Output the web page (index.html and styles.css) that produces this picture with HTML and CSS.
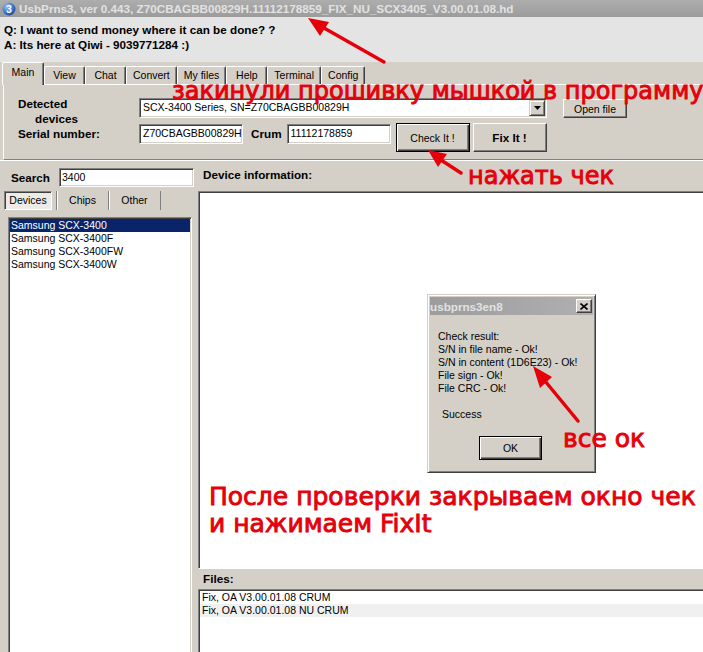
FILE: index.html
```html
<!DOCTYPE html>
<html lang="ru">
<head>
    <meta charset="UTF-8">
    <title>UsbPrns3</title>
    <link rel="stylesheet" href="styles.css">
</head>
<body>

    <div class="window">
        <div class="titlebar">
            <svg class="app-icon" viewBox="0 0 14 14" width="14" height="14">
                <defs>
                    <radialGradient id="ball" cx="0.35" cy="0.3" r="0.8">
                        <stop offset="0" stop-color="#9cc2f4"/>
                        <stop offset="0.6" stop-color="#3b74cf"/>
                        <stop offset="1" stop-color="#1a3f8c"/>
                    </radialGradient>
                </defs>
                <circle cx="7" cy="7" r="6.5" fill="url(#ball)"/>
                <text x="7" y="10.5" text-anchor="middle" class="icon-digit">3</text>
            </svg>
            <span class="title-text">UsbPrns3, ver 0.443, Z70CBAGBB00829H.11112178859_FIX_NU_SCX3405_V3.00.01.08.hd</span>
        </div>

        <div class="qa">
            <p>Q: I want to send money where it can be done? ?</p>
            <p>A: Its here at Qiwi - 9039771284 :)</p>
        </div>

        <div class="tabs">
            <span class="tab active">Main</span>
            <span class="tab">View</span>
            <span class="tab">Chat</span>
            <span class="tab">Convert</span>
            <span class="tab">My files</span>
            <span class="tab">Help</span>
            <span class="tab">Terminal</span>
            <span class="tab">Config</span>
        </div>

        <div class="device-panel">
            <div class="panel-labels">
                <span class="lbl">Detected</span>
                <span class="lbl lbl-indent">devices</span>
                <span class="lbl">Serial number:</span>
            </div>
            <div class="panel-controls">
                <div class="row">
                    <div class="combo">
                        <span class="combo-text">SCX-3400 Series, SN=Z70CBAGBB00829H</span>
                        <span class="combo-btn">
                            <svg viewBox="0 0 7 4" width="7" height="4"><polygon points="0,0 7,0 3.5,4" fill="#000"/></svg>
                        </span>
                    </div>
                    <span class="btn btn-open">Open file</span>
                </div>
                <div class="row row-serial">
                    <div class="field field-serial">Z70CBAGBB00829H</div>
                    <span class="crum-label">Crum</span>
                    <div class="field field-crum">11112178859</div>
                    <span class="btn btn-big btn-default">Check It !</span>
                    <span class="btn btn-big btn-fix">Fix It !</span>
                </div>
            </div>
        </div>

        <div class="workspace">
            <div class="side">
                <div class="search-row">
                    <span class="search-label">Search</span>
                    <div class="field field-search">3400</div>
                </div>
                <div class="subtabs">
                    <span class="subtab active">Devices</span>
                    <span class="subtab">Chips</span>
                    <span class="subtab subtab-last">Other</span>
                </div>
                <ul class="listbox device-list">
                    <li class="selected">Samsung SCX-3400</li>
                    <li>Samsung SCX-3400F</li>
                    <li>Samsung SCX-3400FW</li>
                    <li>Samsung SCX-3400W</li>
                </ul>
            </div>

            <div class="main">
                <div class="section-label">Device information:</div>
                <div class="info-box"></div>
                <div class="section-label files-label">Files:</div>
                <ul class="listbox files-list">
                    <li>Fix, OA V3.00.01.08 CRUM</li>
                    <li>Fix, OA V3.00.01.08 NU CRUM</li>
                </ul>
            </div>
        </div>

        <!-- check result message box -->
        <div class="dialog">
            <div class="dialog-title">
                <span>usbprns3en8</span>
                <span class="dialog-close">
                    <svg viewBox="0 0 8 7" width="8" height="7">
                        <path d="M0.5 0.5 L7.5 6.5 M7.5 0.5 L0.5 6.5" stroke="#000" stroke-width="1.6"/>
                    </svg>
                </span>
            </div>
            <div class="dialog-body">
                <p>Check result:</p>
                <p>S/N in file name - Ok!</p>
                <p>S/N in content (1D6E23) - Ok!</p>
                <p>File sign - Ok!</p>
                <p>File CRC - Ok!</p>
                <p class="success">Success</p>
                <span class="btn btn-default btn-ok">OK</span>
            </div>
        </div>

        <!-- red notes drawn over the screenshot -->
        <svg class="arrows" viewBox="0 0 703 652" width="703" height="652">
            <g stroke="#e5000a" stroke-width="3.5" stroke-linecap="round">
                <line x1="384" y1="62" x2="324" y2="28"/>
                <line x1="461" y1="173" x2="441" y2="160"/>
                <line x1="578" y1="421" x2="545" y2="381"/>
            </g>
            <g fill="#e5000a">
                <polygon points="308,18 329,22 320,36"/>
                <polygon points="428,150 447,154 438,167"/>
                <polygon points="533,366 552,377 540,388"/>
            </g>
        </svg>

        <p class="note note-drop">закинули прошивку мышкой в программу</p>
        <p class="note note-check">нажать чек</p>
        <p class="note note-ok">все ок</p>
        <p class="note note-fix">После проверки закрываем окно чек<br>и нажимаем FixIt</p>
    </div>

</body>
</html>
```

FILE: styles.css
```css
/* General */
* {
    box-sizing: border-box;
}

body {
    margin: 0;
    background: #d4d0c8;
    font-family: 'Liberation Sans', Arial, sans-serif;
    font-size: 10.5px;
    color: #000;
}

.window {
    position: relative;
    width: 703px;
    height: 652px;
    overflow: hidden;
    background: #d4d0c8;
}

/* Title bar and Q/A strip */
.titlebar {
    display: flex;
    align-items: center;
    height: 17px;
    padding-left: 2px;
    background: linear-gradient(#adadad, #9c9c9c);
    color: #e2e2e2;
    font-weight: bold;
    font-size: 11.7px;
    white-space: nowrap;
}

.app-icon {
    flex: none;
    margin-right: 3px;
}

.icon-digit {
    font-family: 'Liberation Sans', sans-serif;
    font-size: 10px;
    font-weight: bold;
    fill: #fff;
}

.qa {
    height: 45px;
    padding: 5px 0 0 4px;
    background: #e4e4e4;
    font-weight: bold;
    font-size: 11.7px;
    line-height: 15px;
}

.qa p {
    margin: 0;
}

/* Tabs */
.tabs {
    display: flex;
    align-items: flex-end;
    height: 22px;
    padding-left: 2px;
}

.tab {
    min-width: 41px;
    height: 18px;
    padding: 0 6px;
    line-height: 17px;
    text-align: center;
    border: 1px solid #fff;
    border-bottom: none;
    border-right-color: #404040;
    box-shadow: inset -1px 0 #808080;
    border-radius: 2px 2px 0 0;
    white-space: nowrap;
}

.tab.active {
    position: relative;
    z-index: 1;
    height: 23px;
    margin-bottom: -1px;
    line-height: 19px;
    background: #d4d0c8;
    min-width: 42px;
}

/* Detected device panel */
.device-panel {
    display: flex;
    height: 76px;
    margin-left: 3px;
    padding: 13px 0 0 14px;
    border-top: 1px solid #fff;
    border-left: 1px solid #fff;
    border-bottom: 1px solid #808080;
}

.panel-labels {
    display: flex;
    flex-direction: column;
    width: 121px;
    margin-top: -2px;
    font-weight: bold;
    font-size: 11.7px;
    line-height: 15px;
}

.lbl-indent {
    padding-left: 17px;
}

.row {
    display: flex;
    align-items: flex-start;
}

.row-serial {
    margin-top: 5px;
}

.field,
.combo {
    height: 20px;
    padding: 0 3px;
    line-height: 17px;
    background: #fff;
    border: 1px solid;
    border-color: #808080 #fff #fff #808080;
    box-shadow: inset 1px 1px #404040, inset -1px -1px #d4d0c8;
    white-space: nowrap;
    overflow: hidden;
}

.combo {
    display: flex;
    justify-content: space-between;
    width: 408px;
    padding: 0 1px 0 3px;
}

.combo-btn {
    display: flex;
    align-items: center;
    justify-content: center;
    width: 16px;
    height: 16px;
    margin-top: 1px;
    background: #d4d0c8;
    border: 1px solid;
    border-color: #d4d0c8 #404040 #404040 #d4d0c8;
    box-shadow: inset 1px 1px #fff, inset -1px -1px #808080;
}

.field-serial,
.field-crum {
    width: 104px;
    margin-top: 1px;
}

.crum-label {
    margin: 1px 5px 0 8px;
    line-height: 20px;
    font-weight: bold;
    font-size: 11.7px;
}

.btn {
    display: flex;
    align-items: center;
    justify-content: center;
    background: #d4d0c8;
    border: 1px solid;
    border-color: #fff #404040 #404040 #fff;
    box-shadow: inset -1px -1px #808080;
    white-space: nowrap;
}

.btn-open {
    width: 64px;
    height: 19px;
    margin: 1px 0 0 16px;
}

.btn-big {
    width: 74px;
    height: 29px;
}

.btn-default {
    border: 1px solid #000;
    box-shadow: inset 1px 1px #fff, inset -1px -1px #404040, inset -2px -2px #808080;
}

.row-serial .btn-default {
    margin-left: 5px;
}

.btn-fix {
    margin-left: 3px;
    font-weight: bold;
    font-size: 11.7px;
}

/* Lower workspace */
.workspace {
    display: flex;
    height: 492px;
    border-top: 1px solid #fff;
}

.side {
    display: flex;
    flex-direction: column;
    width: 195px;
    margin-right: 3px;
}

.search-row {
    display: flex;
    align-items: center;
    height: 19px;
    margin-top: 7px;
}

.search-label {
    width: 59px;
    padding-left: 11px;
    font-weight: bold;
    font-size: 11.7px;
}

.field-search {
    width: 135px;
    height: 19px;
    padding-left: 2px;
}

.subtabs {
    display: flex;
    height: 19px;
    margin-top: 4px;
    padding-left: 4px;
}

.subtab {
    width: 52px;
    line-height: 19px;
    text-align: center;
    border-left: 1px solid #808080;
    box-shadow: inset 1px 0 #fff;
}

.subtab.active {
    width: 48px;
    margin-right: 4px;
    background: #ecebe7;
    border: 1px solid;
    border-color: #808080 #fff #fff #808080;
    box-shadow: inset 1px 1px #404040;
    line-height: 17px;
}

.subtab-last {
    width: 53px;
    border-right: 1px solid #808080;
}

.listbox {
    margin: 0;
    padding: 1px 1px 0 1px;
    list-style: none;
    background: #fff;
    border: 1px solid;
    border-color: #808080 #fff #fff #808080;
    box-shadow: inset 1px 1px #404040, inset -1px -1px #d4d0c8;
}

.listbox li {
    height: 13px;
    padding-left: 1px;
    line-height: 13px;
    white-space: nowrap;
}

.device-list {
    flex: 1;
    margin: 7px 3px -4px 8px;
}

.device-list li.selected {
    background: #0a246a;
    color: #fff;
}

.main {
    display: flex;
    flex-direction: column;
    flex: 1;
    margin-right: -3px;
}

.section-label {
    height: 30px;
    padding: 6px 0 0 5px;
    line-height: 15px;
    font-weight: bold;
    font-size: 11.7px;
}

.info-box {
    height: 378px;
    background: #fff;
    border: 1px solid;
    border-color: #808080 #fff #fff #808080;
    box-shadow: inset 1px 1px #404040;
}

.files-label {
    height: 20px;
    padding-top: 2px;
}

.files-list {
    flex: 1;
    margin-bottom: -4px;
}

.files-list li {
    padding-left: 2px;
}

.files-list li:nth-child(2) {
    background: #f0f0f0;
}

/* Message box */
.dialog {
    position: absolute;
    left: 427px;
    top: 294px;
    width: 169px;
    height: 179px;
    padding: 2px;
    background: #d4d0c8;
    border: 1px solid;
    border-color: #d4d0c8 #404040 #404040 #d4d0c8;
    box-shadow: inset 1px 1px #fff, inset -1px -1px #808080;
}

.dialog-title {
    display: flex;
    justify-content: space-between;
    align-items: center;
    height: 18px;
    padding-right: 1px;
    background: linear-gradient(90deg, #9c9c9c, #b0b0b0);
    color: #e2e2e2;
    font-weight: bold;
    font-size: 11.7px;
}

.dialog-close {
    display: flex;
    align-items: center;
    justify-content: center;
    width: 16px;
    height: 14px;
    background: #d4d0c8;
    border: 1px solid;
    border-color: #fff #404040 #404040 #fff;
    box-shadow: inset -1px -1px #808080;
}

.dialog-body {
    padding: 15px 0 0 8px;
    line-height: 13px;
}

.dialog-body p {
    margin: 0;
}

.dialog-body .success {
    margin-top: 13px;
    padding-left: 4px;
}

.btn-ok {
    width: 63px;
    height: 24px;
    margin: 15px 0 0 41px;
}

/* Red annotations */
.arrows {
    position: absolute;
    left: 0;
    top: 0;
    pointer-events: none;
}

.note {
    position: absolute;
    margin: 0;
    font-family: 'DejaVu Sans', Verdana, sans-serif;
    font-size: 24px;
    line-height: 28px;
    color: #e5000a;
    -webkit-text-stroke: 0.9px #e5000a;
    white-space: nowrap;
}

.note-drop {
    left: 172px;
    top: 81px;
    line-height: 20px;
}

.note-check {
    left: 468px;
    top: 162px;
}

.note-ok {
    left: 563px;
    top: 425px;
    font-size: 25px;
}

.note-fix {
    left: 209px;
    top: 483px;
    font-size: 25px;
    line-height: 27px;
}
```
